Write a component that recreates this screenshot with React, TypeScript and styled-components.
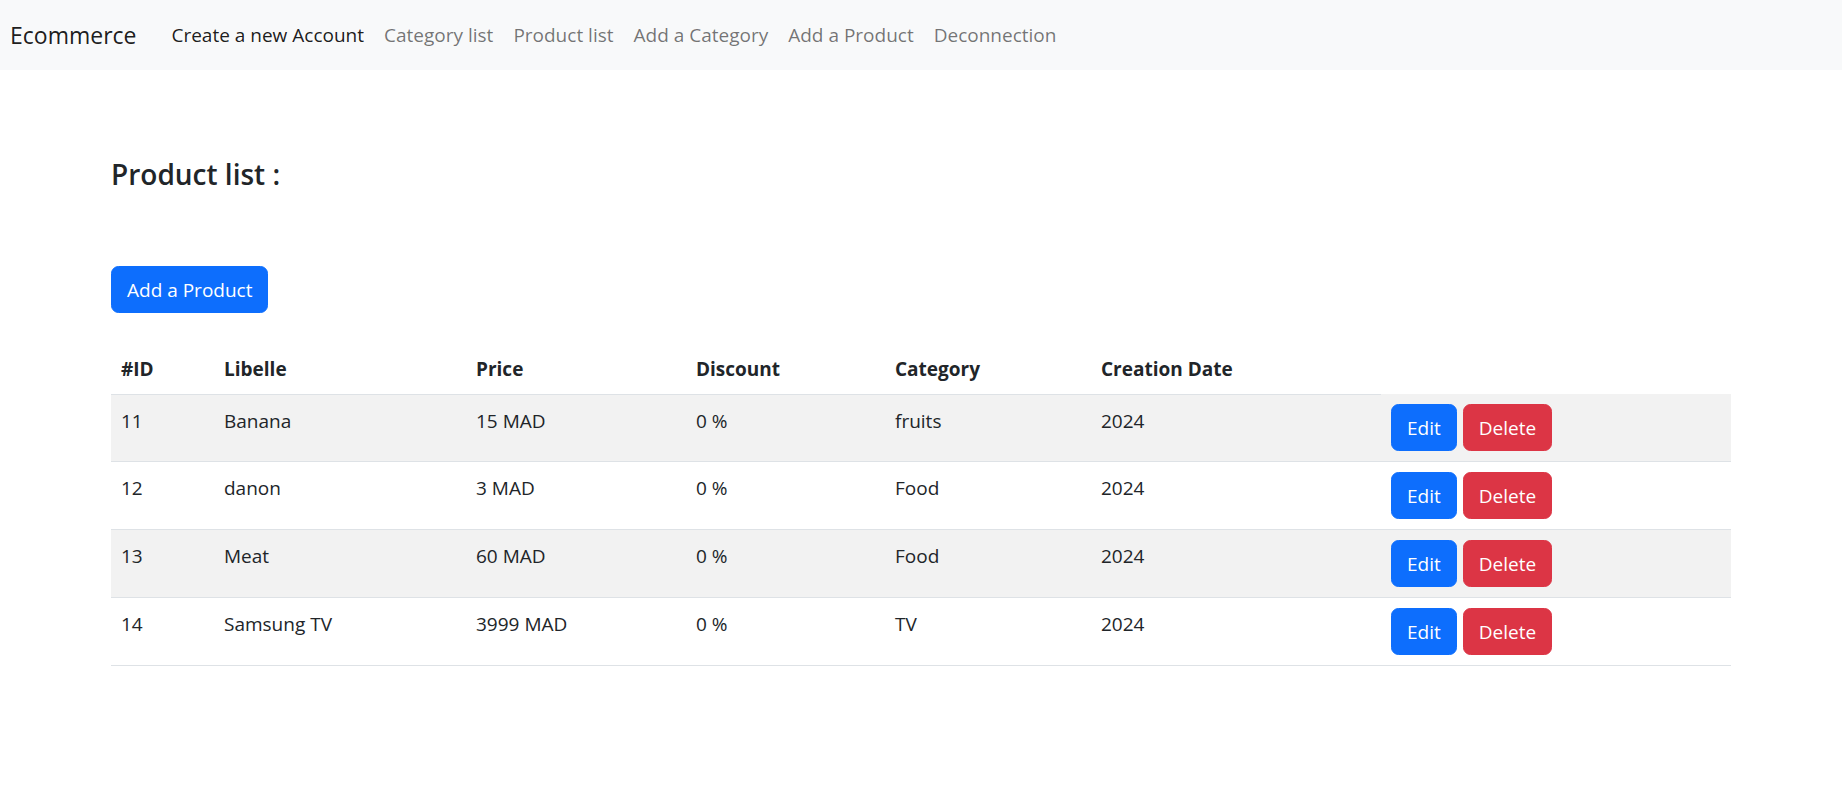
import React from "react";
import styled, { createGlobalStyle } from "styled-components";

const GlobalStyle = createGlobalStyle`
  html, body {
    margin: 0;
    padding: 0;
    background: #ffffff;
  }
  body {
    font-family: "Open Sans", "Noto Sans", "Liberation Sans", sans-serif;
    color: #212529;
    font-size: 19px;
    line-height: 30px;
  }
  * { box-sizing: border-box; }
`;

const Navbar = styled.nav`
  height: 70px;
  background: #f8f9fa;
  display: flex;
  align-items: center;
  padding: 0 10px;
`;

const Brand = styled.a`
  font-size: 23px;
  line-height: 36px;
  color: rgba(0, 0, 0, 0.9);
  margin-right: 25px;
  text-decoration: none;
`;

const NavList = styled.ul`
  display: flex;
  list-style: none;
  margin: 0;
  padding: 0;
`;

const NavLink = styled.a<{ $active?: boolean }>`
  display: block;
  padding: 10px;
  font-size: 19px;
  line-height: 30px;
  text-decoration: none;
  color: ${(p) => (p.$active ? "rgba(0, 0, 0, 0.9)" : "rgba(0, 0, 0, 0.55)")};
`;

const Container = styled.main`
  width: 1650px;
  margin: 0 auto;
  padding: 86px 15px 0;
`;

const Title = styled.h4`
  margin: 0;
  font-size: 28px;
  line-height: 36px;
  font-weight: 600;
  color: #212529;
`;

const Button = styled.button<{ $variant: "primary" | "danger" }>`
  font-family: inherit;
  font-size: 19px;
  line-height: 30px;
  padding: 7.5px 15px;
  border: 1px solid ${(p) => (p.$variant === "primary" ? "#0d6efd" : "#dc3545")};
  background: ${(p) => (p.$variant === "primary" ? "#0d6efd" : "#dc3545")};
  color: #ffffff;
  border-radius: 7.5px;
  cursor: pointer;
`;

const AddButton = styled(Button)`
  margin-top: 74px;
`;

const Table = styled.table`
  width: 100%;
  margin-top: 30.5px;
  border-collapse: collapse;
  table-layout: fixed;
  vertical-align: top;
`;

const Col = styled.col<{ $w?: number }>`
  width: ${(p) => (p.$w ? `${p.$w}px` : "auto")};
`;

const Th = styled.th`
  text-align: left;
  font-weight: 700;
  padding: 10px;
  vertical-align: top;
  border-bottom: 1px solid #dee2e6;
  color: #212529;
`;

const Tr = styled.tr<{ $striped?: boolean }>`
  background: ${(p) => (p.$striped ? "#f2f2f2" : "#ffffff")};
`;

const Td = styled.td`
  padding: 10px;
  vertical-align: top;
  border-bottom: 1px solid #dee2e6;
  color: #212529;
`;

const CellText = styled.span`
  display: block;
  padding-top: 1px;
`;

const Actions = styled.div`
  display: flex;
  gap: 6px;
`;

const products = [
  { id: 11, libelle: "Banana", price: "15 MAD", discount: "0 %", category: "fruits", date: "2024" },
  { id: 12, libelle: "danon", price: "3 MAD", discount: "0 %", category: "Food", date: "2024" },
  { id: 13, libelle: "Meat", price: "60 MAD", discount: "0 %", category: "Food", date: "2024" },
  { id: 14, libelle: "Samsung TV", price: "3999 MAD", discount: "0 %", category: "TV", date: "2024" },
];

const links = [
  { label: "Create a new Account", active: true },
  { label: "Category list" },
  { label: "Product list" },
  { label: "Add a Category" },
  { label: "Add a Product" },
  { label: "Deconnection" },
];

export default function App() {
  return (
    <>
      <GlobalStyle />
      <Navbar>
        <Brand href="#">Ecommerce</Brand>
        <NavList>
          {links.map((l) => (
            <li key={l.label}>
              <NavLink href="#" $active={l.active}>
                {l.label}
              </NavLink>
            </li>
          ))}
        </NavList>
      </Navbar>
      <Container>
        <Title>Product list :</Title>
        <AddButton $variant="primary">Add a Product</AddButton>
        <Table>
          <colgroup>
            <Col $w={103} />
            <Col $w={252} />
            <Col $w={220} />
            <Col $w={199} />
            <Col $w={206} />
            <Col $w={290} />
            <Col />
          </colgroup>
          <thead>
            <tr>
              <Th>#ID</Th>
              <Th>Libelle</Th>
              <Th>Price</Th>
              <Th>Discount</Th>
              <Th>Category</Th>
              <Th>Creation Date</Th>
            </tr>
          </thead>
          <tbody>
            {products.map((p, i) => (
              <Tr key={p.id} $striped={i % 2 === 0}>
                <Td><CellText>{p.id}</CellText></Td>
                <Td><CellText>{p.libelle}</CellText></Td>
                <Td><CellText>{p.price}</CellText></Td>
                <Td><CellText>{p.discount}</CellText></Td>
                <Td><CellText>{p.category}</CellText></Td>
                <Td><CellText>{p.date}</CellText></Td>
                <Td>
                  <Actions>
                    <Button $variant="primary">Edit</Button>
                    <Button $variant="danger">Delete</Button>
                  </Actions>
                </Td>
              </Tr>
            ))}
          </tbody>
        </Table>
      </Container>
    </>
  );
}
